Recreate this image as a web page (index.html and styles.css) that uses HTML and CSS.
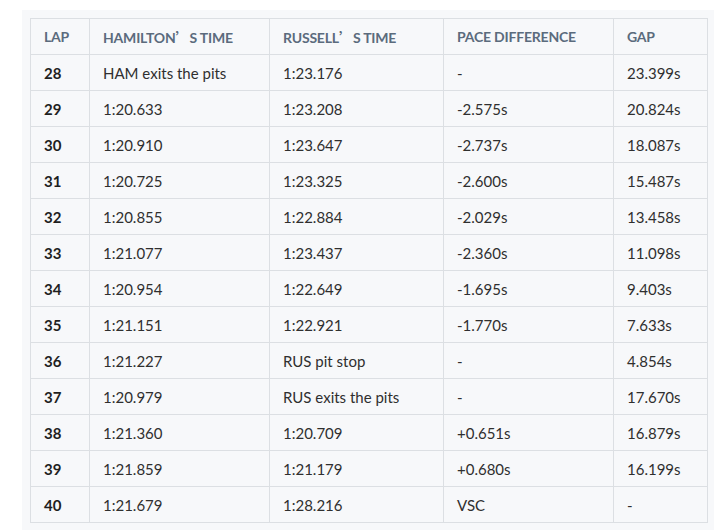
FILE: index.html
```html
<!DOCTYPE html>
<html>
<head>
<meta charset="utf-8">
<link rel="stylesheet" href="styles.css">
</head>
<body>
<div class="panel">
<table class="laps">
<thead>
<tr><th class="c-lap">LAP</th><th class="c-ham">HAMILTON<span class="cjk">’</span>S TIME</th><th class="c-rus">RUSSELL<span class="cjk">’</span>S TIME</th><th class="c-pace">PACE DIFFERENCE</th><th class="c-gap">GAP</th></tr>
</thead>
<tbody>
<tr><td class="lap">28</td><td>HAM exits the pits</td><td>1:23.176</td><td>-</td><td>23.399s</td></tr>
<tr><td class="lap">29</td><td>1:20.633</td><td>1:23.208</td><td>-2.575s</td><td>20.824s</td></tr>
<tr><td class="lap">30</td><td>1:20.910</td><td>1:23.647</td><td>-2.737s</td><td>18.087s</td></tr>
<tr><td class="lap">31</td><td>1:20.725</td><td>1:23.325</td><td>-2.600s</td><td>15.487s</td></tr>
<tr><td class="lap">32</td><td>1:20.855</td><td>1:22.884</td><td>-2.029s</td><td>13.458s</td></tr>
<tr><td class="lap">33</td><td>1:21.077</td><td>1:23.437</td><td>-2.360s</td><td>11.098s</td></tr>
<tr><td class="lap">34</td><td>1:20.954</td><td>1:22.649</td><td>-1.695s</td><td>9.403s</td></tr>
<tr><td class="lap">35</td><td>1:21.151</td><td>1:22.921</td><td>-1.770s</td><td>7.633s</td></tr>
<tr><td class="lap">36</td><td>1:21.227</td><td>RUS pit stop</td><td>-</td><td>4.854s</td></tr>
<tr><td class="lap">37</td><td>1:20.979</td><td>RUS exits the pits</td><td>-</td><td>17.670s</td></tr>
<tr><td class="lap">38</td><td>1:21.360</td><td>1:20.709</td><td>+0.651s</td><td>16.879s</td></tr>
<tr><td class="lap">39</td><td>1:21.859</td><td>1:21.179</td><td>+0.680s</td><td>16.199s</td></tr>
<tr><td class="lap">40</td><td>1:21.679</td><td>1:28.216</td><td>VSC</td><td>-</td></tr>
</tbody>
</table>
</div>
</body>
</html>
```
FILE: styles.css
```css
html, body {
  margin: 0;
  padding: 0;
  background: #ffffff;
}
body {
  padding: 10px 6px 0 22px;
  font-family: "Lato", "Noto Sans", sans-serif;
}
.panel {
  background: #f7f8fa;
  padding: 8px 8px 0 8px;
  height: 540px;
  box-sizing: border-box;
}
.laps {
  border-collapse: collapse;
  table-layout: fixed;
  width: 677px;
  background: #f7f8fa;
}
.laps th, .laps td {
  border: 1px solid #dcdfe3;
  height: 36px;
  padding: 0 0 0 13px;
  text-align: left;
  box-sizing: border-box;
  white-space: nowrap;
}
.laps th {
  font-size: 14px;
  font-weight: 700;
  color: #5b6b7d;
  letter-spacing: -0.2px;
}
.laps td {
  font-size: 15px;
  color: #2f2f2f;
}
.laps td.lap {
  font-weight: 700;
  color: #1f1f1f;
}
.c-lap { width: 59px; }
.c-ham { width: 180px; }
.c-rus { width: 174px; }
.c-pace { width: 170px; }
.c-gap { width: 94px; }
.cjk {
  font-family: "Noto Sans CJK SC", sans-serif;
  font-weight: 700;
  letter-spacing: 0;
}
```
